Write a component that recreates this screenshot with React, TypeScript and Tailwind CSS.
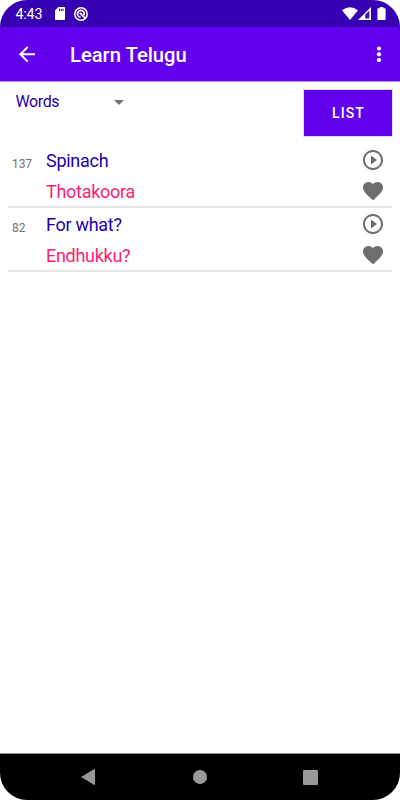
import React from 'react';

type Entry = { id: number; english: string; telugu: string };

const entries: Entry[] = [
  { id: 137, english: 'Spinach', telugu: 'Thotakoora' },
  { id: 82, english: 'For what?', telugu: 'Endhukku?' },
];

function StatusBar() {
  return (
    <div className="flex h-[27px] shrink-0 items-center bg-[#3700b3] pl-[15.5px] pr-[14px] text-white">
      <span className="w-[39.5px] pt-[2px] text-[14.3px] leading-[25px] tracking-[-0.2px]">4:43</span>
      <svg className="h-[13px] w-[10px]" viewBox="0 0 10 13" fill="currentColor">
        <path fillRule="evenodd" d="M3.4 0H9Q10 0 10 1V12Q10 13 9 13H1Q0 13 0 12V3.6ZM4 1.7V4H5V1.7ZM5.8 1.7V4H6.8V1.7ZM7.6 1.7V4H8.6V1.7Z" />
      </svg>
      <svg className="ml-[9px] h-[14px] w-[14px]" viewBox="0 0 14 14" fill="none" stroke="currentColor">
        <circle cx="7" cy="7" r="6.2" strokeWidth="1.5" />
        <path d="M4.2 8.8A3.3 3.3 0 1 1 9.8 8.4" strokeWidth="1.6" />
        <path d="M5.8 5.8L11 11" strokeWidth="1.7" />
        <path d="M4.2 8.8Q5 10 6.8 10.2" strokeWidth="1.3" />
      </svg>
      <span className="flex-1" />
      <svg className="h-[13px] w-[16px]" viewBox="0 0 16 13" fill="currentColor">
        <path d="M0 3.3Q8 -2.8 16 3.3L8 13Z" />
      </svg>
      <svg className="h-[13px] w-[13px]" viewBox="0 0 13 13">
        <path d="M0 13L13 0V13Z" fill="#fff" />
        <path d="M7.2 7.6L11.4 3.4V11.4H7.2Z" fill="#4514b9" />
      </svg>
      <svg className="ml-[6px] h-[13px] w-[9px]" viewBox="0 0 9 13" fill="currentColor">
        <path d="M2.7 0H6.3V1.2H7.8Q8.6 1.2 8.6 2V12.2Q8.6 13 7.8 13H1.2Q.4 13 .4 12.2V2Q.4 1.2 1.2 1.2H2.7Z" />
      </svg>
    </div>
  );
}

function AppBar() {
  return (
    <header className="flex h-[54px] shrink-0 items-center bg-[#6200ee] pl-[15px] pr-[9.5px] text-white shadow-[0_1px_0_#b094dc]">
      <svg className="h-6 w-6" viewBox="0 0 24 24" fill="currentColor">
        <path d="M20 11.3H7.83l5.59-5.59L12 4.3l-8 8 8 8 1.41-1.41L7.83 13.3H20v-2z" />
      </svg>
      <h1 className="ml-[31px] flex-1 pt-[2px] text-[20.2px] font-medium leading-6">Learn Telugu</h1>
      <svg className="h-6 w-6" viewBox="0 0 24 24" fill="currentColor">
        <circle cx="12" cy="6.5" r="2.1" />
        <circle cx="12" cy="12.3" r="2.1" />
        <circle cx="12" cy="18.1" r="2.1" />
      </svg>
    </header>
  );
}

function WordRow({ entry }: { entry: Entry }) {
  return (
    <li className="flex h-16 border-b-2 border-[#e6e6e6]">
      <span className="w-[38px] pl-[4px] pt-[12px] text-[12px] leading-4 tracking-[-0.1px] text-[#737373]">{entry.id}</span>
      <div className="flex-1 pt-px text-[18px] leading-[31px] tracking-[-0.28px]">
        <div className="text-[#1f00a8]">{entry.english}</div>
        <div className="text-[#fb2174]">{entry.telugu}</div>
      </div>
      <div className="mr-[7px] flex w-6 flex-col gap-[7px] pt-[3.5px] text-[#6e6e6e]">
        <svg className="h-6 w-6" viewBox="0 0 24 24" fill="currentColor">
          <path d="M10 16.5l6-4.5-6-4.5v9zM12 2C6.48 2 2 6.48 2 12s4.48 10 10 10 10-4.48 10-10S17.52 2 12 2zm0 18c-4.41 0-8-3.59-8-8s3.59-8 8-8 8 3.59 8 8-3.59 8-8 8z" />
        </svg>
        <svg className="h-6 w-6" viewBox="0 0 24 24" fill="currentColor">
          <path d="M12 21.35l-1.45-1.32C5.4 15.36 2 12.28 2 8.5 2 5.42 4.42 3 7.5 3c1.74 0 3.41.81 4.5 2.09C13.09 3.81 14.76 3 16.5 3 19.58 3 22 5.42 22 8.5c0 3.78-3.4 6.86-8.55 11.54L12 21.35z" />
        </svg>
      </div>
    </li>
  );
}

function NavigationBar() {
  return (
    <nav className="flex h-[47px] shrink-0 items-center border-t border-[#8d8d8d] bg-black pl-[81px] pr-[82px]">
      <svg className="h-4 w-[14px]" viewBox="0 0 14 16" fill="#999">
        <path d="M0 8L13 .2Q14 -.2 14 1V15Q14 16.2 13 15.8Z" />
      </svg>
      <span className="ml-[98px] h-[14px] w-[14px] rounded-full bg-[#999]" />
      <span className="ml-auto h-[15px] w-[15px] rounded-[1px] bg-[#999]" />
    </nav>
  );
}

export default function App() {
  return (
    <div className="flex h-[800px] w-[400px] flex-col overflow-hidden rounded-[27px] bg-white font-['Roboto',sans-serif]">
      <StatusBar />
      <AppBar />
      <main className="flex-1 px-2 pt-[9px]">
        <div className="flex h-[54px] items-start justify-between">
          <button className="flex h-6 w-[116px] items-center justify-between pl-[7.5px] text-[16px] tracking-[-0.4px] text-[#1f00a8]">
            Words
            <svg className="h-[5px] w-[10px]" viewBox="0 0 10 5" fill="#737373">
              <path d="M0 0H10L5 5Z" />
            </svg>
          </button>
          <button className="h-[46px] w-[88px] bg-[#6200ee] pl-[1px] pt-[1px] text-[14px] font-medium tracking-[1.1px] text-white outline outline-1 outline-[#dddddf]">
            LIST
          </button>
        </div>
        <ul>
          {entries.map((entry) => (
            <WordRow key={entry.id} entry={entry} />
          ))}
        </ul>
      </main>
      <NavigationBar />
    </div>
  );
}
